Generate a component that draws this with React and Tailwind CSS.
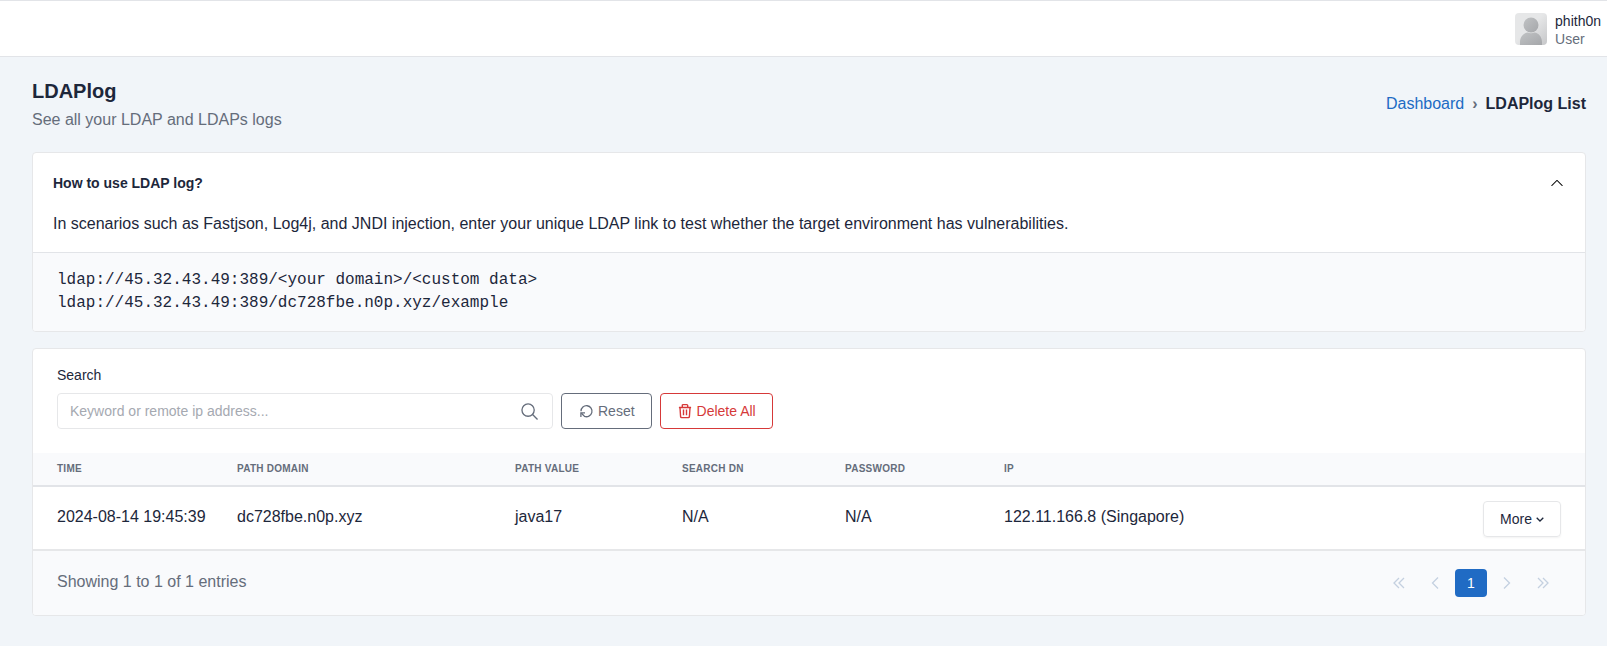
import { useId } from "react";
import { BsChevronUp } from "react-icons/bs";

function Avatar() {
  const id = useId();
  return (
    <svg viewBox="0 0 32 32" className="size-8 rounded" role="img" aria-label="phith0n">
      <defs>
        <linearGradient id={`${id}-bg`} x1="0" y1="0" x2="1" y2="1">
          <stop offset="0.45" stopColor="#e6e7e8" />
          <stop offset="1" stopColor="#c6c7c9" />
        </linearGradient>
        <linearGradient id={`${id}-fg`} x1="0" y1="0" x2="1" y2="1">
          <stop offset="0.2" stopColor="#bbbdbf" />
          <stop offset="1" stopColor="#a5a7aa" />
        </linearGradient>
      </defs>
      <rect width="32" height="32" fill={`url(#${id}-bg)`} />
      <circle cx="16" cy="12" r="7.5" fill={`url(#${id}-fg)`} />
      <path d="M5 32v-3c0-5 3.500-9 7.500-9.400 2.300 1 4.700 1 7 0C23.500 20 27 24 27 29v3z" fill={`url(#${id}-fg)`} />
    </svg>
  );
}

function SearchIcon() {
  return (
    <svg viewBox="0 0 18 18" className="size-[17px]" fill="none" stroke="currentColor" strokeWidth="1.4" aria-hidden="true">
      <circle cx="7.500" cy="7.500" r="6.500" />
      <path d="M12 12l5.500 5.500" />
    </svg>
  );
}

function ResetIcon() {
  return (
    <svg viewBox="0 0 16 16" className="size-4" fill="none" stroke="currentColor" strokeWidth="1.3" aria-hidden="true">
      <path d="M3 8.200A5.500 5.500 0 1 1 6.400 13.300L3.400 10.300" />
      <path d="M2.900 14V9.900H7" />
    </svg>
  );
}

function TrashIcon() {
  return (
    <svg viewBox="0 0 16 16" className="size-4" fill="none" stroke="currentColor" strokeWidth="1.4" strokeLinejoin="round" aria-hidden="true">
      <path d="M1.900 4.500h12.200M5.300 4.300V2.500q0-.9.900-.9h3.600q.9 0 .9.900v1.800" />
      <path d="M3 4.700l.6 9q.1.900 1 .9h6.800q.9 0 1-.9l.6-9M6.500 6.500v5.800M9.500 6.500v5.800" />
    </svg>
  );
}

function PagerIcon({ d }) {
  return (
    <svg viewBox="0 0 12 12" className="size-3" fill="none" stroke="currentColor" strokeWidth="1.3" aria-hidden="true">
      <path d={d} />
    </svg>
  );
}

const columns = [
  { label: "Time", width: "w-[204px]" },
  { label: "Path Domain", width: "w-[278px]" },
  { label: "Path Value", width: "w-[167px]" },
  { label: "Search DN", width: "w-[163px]" },
  { label: "Password", width: "w-[159px]" },
  { label: "IP", width: "" },
];

const rows = [
  ["2024-08-14 19:45:39", "dc728fbe.n0p.xyz", "java17", "N/A", "N/A", "122.11.166.8 (Singapore)"],
];

function PageButton({ label, d }) {
  return (
    <button type="button" disabled aria-label={label} className="flex h-7 w-8 items-center justify-center text-[#c4d0e0]">
      <PagerIcon d={d} />
    </button>
  );
}

export default function App() {
  return (
    <div className="min-h-screen bg-[#f1f5f9] font-['Liberation_Sans',Arial,sans-serif] text-base leading-6 text-[#1d273b]">
      <header className="flex h-[57px] items-center justify-end gap-2 border-y border-[#e2e4e8] bg-white pr-1.5">
        <Avatar />
        <div className="pt-0.5 text-sm leading-[18px]">
          <div>phith0n</div>
          <div className="text-[#656d7b]">User</div>
        </div>
      </header>

      <main className="pt-5 pr-[21px] pb-8 pl-8">
        <div className="flex items-center justify-between">
          <div>
            <h1 className="text-xl leading-7 font-bold">LDAPlog</h1>
            <p className="mt-[3px] text-[#656d7b]">See all your LDAP and LDAPs logs</p>
          </div>
          <nav aria-label="Breadcrumb" className="pb-px">
            <ol className="flex gap-2">
              <li><a href="#dashboard" className="text-[#206bc4]">Dashboard</a></li>
              <li aria-hidden="true" className="font-bold text-[#656d7b]">›</li>
              <li aria-current="page" className="font-bold">LDAPlog List</li>
            </ol>
          </nav>
        </div>

        <section className="mt-5 overflow-hidden rounded border border-[#e6e7e9] bg-white">
          <h2>
            <button type="button" aria-expanded="true" className="flex w-full items-center justify-between px-5 pt-5 pb-[19px] text-sm leading-5 font-bold">
              How to use LDAP log?
              <BsChevronUp className="mr-px size-[14px] text-black" />
            </button>
          </h2>
          <p className="px-5 pb-4">
            In scenarios such as Fastjson, Log4j, and JNDI injection, enter your unique LDAP link to test whether the target environment has vulnerabilities.
          </p>
          <pre className="border-t border-[#e2e4e8] bg-[#f9fafc] px-6 py-4 font-['Liberation_Mono',monospace] text-base leading-[23px]">
            {"ldap://45.32.43.49:389/<your domain>/<custom data>\nldap://45.32.43.49:389/dc728fbe.n0p.xyz/example"}
          </pre>
        </section>

        <section className="mt-4 overflow-hidden rounded border border-[#e6e7e9] bg-white">
          <form className="px-6 pt-4 pb-6 text-sm leading-5">
            <label htmlFor="search">Search</label>
            <div className="mt-2 flex gap-2">
              <div className="flex h-9 w-[496px] rounded border border-[#e6e7e9]">
                <input id="search" type="text" placeholder="Keyword or remote ip address..." className="min-w-0 grow px-3 outline-none placeholder:text-[#a5a9b1]" />
                <button type="submit" aria-label="Search" className="px-[14px] text-[#656d7b]"><SearchIcon /></button>
              </div>
              <button type="button" className="flex h-9 items-center gap-1 rounded border border-[#656d7b] px-4 text-[#656d7b]">
                <ResetIcon />
                Reset
              </button>
              <button type="button" className="flex h-9 items-center gap-1 rounded border border-[#d63939] px-4 text-[#d63939]">
                <TrashIcon />
                Delete All
              </button>
            </div>
          </form>

          <table className="w-full table-fixed text-left">
            <thead className="border-b-2 border-[#e2e4e8] bg-[#f9fafc] text-[10px] leading-4 text-[#656d7b] uppercase">
              <tr>
                {columns.map(({ label, width }) => (
                  <th key={label} scope="col" className={`${width} py-2 font-bold tracking-wide first:pl-6`}>{label}</th>
                ))}
                <td className="w-[120px]" />
              </tr>
            </thead>
            <tbody>
              {rows.map((row) => (
                <tr key={row[0]} className="border-b-2 border-[#e6e7e9]">
                  {row.map((cell, i) => (
                    <td key={i} className="pb-0.5 first:pl-6">{cell}</td>
                  ))}
                  <td className="pt-[14px] pr-6 pb-3">
                    <button type="button" className="ml-auto flex h-9 items-center gap-1 rounded border border-[#e6e7e9] px-4 text-sm shadow-xs">
                      More
                      <svg viewBox="0 0 8 8" className="size-2" fill="none" stroke="currentColor" strokeWidth="1.3" aria-hidden="true">
                        <path d="M.7 2.700l3.300 3.300 3.300-3.300" />
                      </svg>
                    </button>
                  </td>
                </tr>
              ))}
            </tbody>
          </table>

          <footer className="flex h-16 items-center justify-between bg-[#f9fafc] pr-[26px] pl-6 text-[#656d7b]">
            <p className="pb-0.5">Showing 1 to 1 of 1 entries</p>
            <nav aria-label="Pagination" className="flex gap-1">
              <PageButton label="First page" d="M6 1 1 6l5 5M11 1 6 6l5 5" />
              <PageButton label="Previous page" d="M9 .5 3.500 6 9 11.500" />
              <button type="button" aria-current="page" className="h-7 w-8 rounded bg-[#206bc4] text-sm text-white">1</button>
              <PageButton label="Next page" d="M3 .5 8.500 6 3 11.500" />
              <PageButton label="Last page" d="M1 1l5 5-5 5M6 1l5 5-5 5" />
            </nav>
          </footer>
        </section>
      </main>
    </div>
  );
}
